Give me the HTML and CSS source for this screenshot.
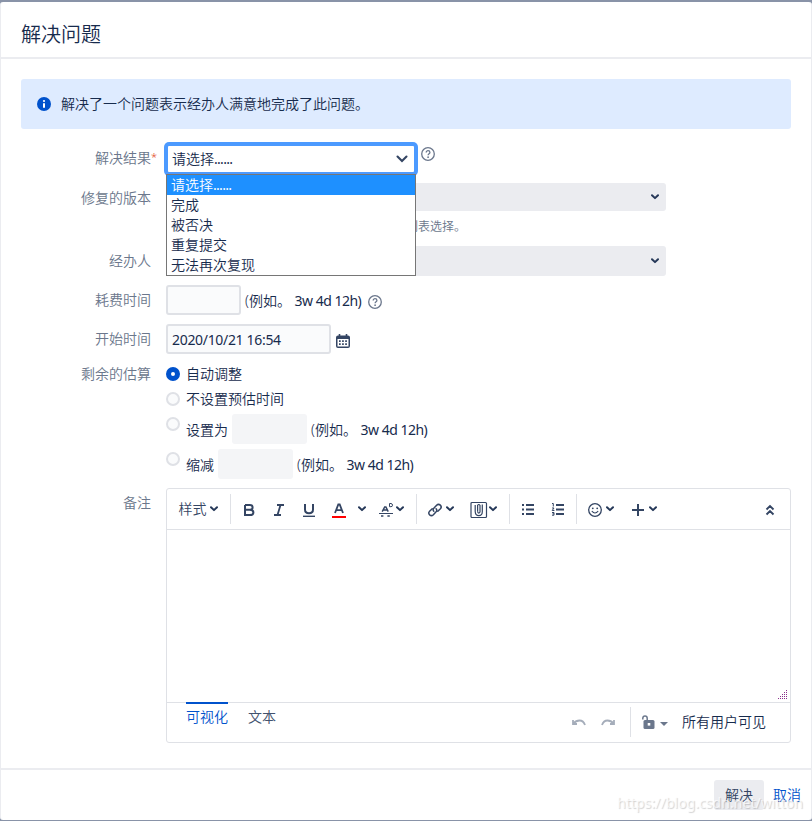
FILE: index.html
```html
<!DOCTYPE html>
<html lang="zh-CN">
<head>
  <meta charset="utf-8">
  <title>解决问题</title>
  <link rel="stylesheet" href="styles.css">
</head>
<body>
  <svg class="sprite" width="0" height="0">
    <symbol id="chevron" viewBox="0 0 8 6"><path d="M1 1.2 L4 4.1 L7 1.2" fill="none" stroke="currentColor" stroke-width="2" stroke-linecap="round" stroke-linejoin="round"/></symbol>
    <symbol id="help" viewBox="0 0 14 14"><circle cx="7" cy="7" r="6.3" fill="none" stroke="currentColor" stroke-width="1.3"/><path d="M5.2 5.6 C5.2 3 8.9 3.2 8.9 5.4 C8.9 6.8 7.1 6.8 7.1 8.3" fill="none" stroke="currentColor" stroke-width="1.3"/><circle cx="7.1" cy="10.2" r=".85" fill="currentColor"/></symbol>
  </svg>

  <div class="dialog">
    <div class="dialog-header">
      <h2>解决问题</h2>
    </div>

    <div class="dialog-content">
      <div class="message">
        <svg class="info-icon" viewBox="0 0 14 14"><circle cx="7" cy="7" r="7" fill="#0052cc"/><circle cx="7" cy="4" r="1.1" fill="#fff"/><path d="M7 6.2 V10.8" stroke="#fff" stroke-width="2"/></svg>
        <span>解决了一个问题表示经办人满意地完成了此问题。</span>
      </div>

      <div class="row row-result">
        <div class="label">解决结果<span class="required">*</span></div>
        <div class="field">
          <div class="select focused">
            <span>请选择<span class="dots">......</span></span>
            <svg class="select-arrow" viewBox="0 0 12 8"><path d="M1.5 1.5 L6 6 L10.5 1.5" fill="none" stroke="currentColor" stroke-width="2.1" stroke-linecap="round"/></svg>
            <div class="options">
              <div class="option selected">请选择<span class="dots">......</span></div>
              <div class="option">完成</div>
              <div class="option">被否决</div>
              <div class="option">重复提交</div>
              <div class="option">无法再次复现</div>
            </div>
          </div>
          <svg class="help help-result"><use href="#help"/></svg>
        </div>
      </div>

      <div class="row row-version">
        <div class="label">修复的版本</div>
        <div class="field stacked">
          <div class="picker picker-short"><svg class="chevron"><use href="#chevron"/></svg></div>
          <div class="description">列表选择。</div>
        </div>
      </div>

      <div class="row">
        <div class="label">经办人</div>
        <div class="field">
          <div class="picker"><svg class="chevron"><use href="#chevron"/></svg></div>
        </div>
      </div>

      <div class="row">
        <div class="label">耗费时间</div>
        <div class="field">
          <div class="text-input short"></div>
          <span class="hint">(例如。 <span class="sample">3w 4d 12h)</span></span>
          <svg class="help help-time"><use href="#help"/></svg>
        </div>
      </div>

      <div class="row row-date">
        <div class="label">开始时间</div>
        <div class="field">
          <div class="text-input">2020/10/21 16:54</div>
          <svg class="calendar" viewBox="0 0 14 14"><path d="M2 1.5 H12 Q14 1.5 14 3.5 V12 Q14 14 12 14 H2 Q0 14 0 12 V3.5 Q0 1.5 2 1.5Z M1.5 5 V12.5 H12.5 V5Z" fill="#344563" fill-rule="evenodd"/><path d="M3.5 0 V3 M10.5 0 V3" stroke="#344563" stroke-width="1.6"/><path d="M3 7.2 H11 M3 10.2 H11" stroke="#344563" stroke-width="1.8" stroke-dasharray="1.7 1.4"/></svg>
        </div>
      </div>

      <div class="row row-estimate">
        <div class="label">剩余的估算</div>
        <div class="radios">
          <div class="radio-row"><i class="radio checked"></i><span>自动调整</span></div>
          <div class="radio-row"><i class="radio"></i><span>不设置预估时间</span></div>
          <div class="radio-row tall"><i class="radio"></i><span>设置为</span><div class="disabled-input"></div><span>(例如。 <span class="sample">3w 4d 12h)</span></span></div>
          <div class="radio-row tall"><i class="radio"></i><span>缩减</span><div class="disabled-input"></div><span>(例如。 <span class="sample">3w 4d 12h)</span></span></div>
        </div>
      </div>

      <div class="row row-comment">
        <div class="label">备注</div>
        <div class="editor">
          <div class="toolbar">
            <div class="group">
              <div class="tool tool-style"><span>样式</span><svg class="chevron"><use href="#chevron"/></svg></div>
            </div>
            <div class="group group-text">
              <div class="tool"><svg width="16" height="16" viewBox="0 0 16 16"><path d="M4 3 H8.8 Q11.6 3 11.6 5.4 Q11.6 7.8 8.8 7.8 H4 M8.8 7.8 Q12.4 7.8 12.4 10.4 Q12.4 13 8.8 13 H4 V3" fill="none" stroke="currentColor" stroke-width="2"/></svg></div>
              <div class="tool"><svg width="16" height="16" viewBox="0 0 16 16"><path d="M6 3 H13 M3 13 H10 M9.5 3 L6.5 13" fill="none" stroke="currentColor" stroke-width="1.8"/></svg></div>
              <div class="tool"><svg width="16" height="16" viewBox="0 0 16 16"><path d="M4 2 V7.5 Q4 11.3 8 11.3 Q12 11.3 12 7.5 V2" fill="none" stroke="currentColor" stroke-width="2"/><path d="M2 14.3 H14" stroke="currentColor" stroke-width="1.4"/></svg></div>
              <div class="tool"><svg width="16" height="16" viewBox="0 0 16 16"><path d="M4 11 L7.3 2.5 H8.7 L12 11 M5.2 8.2 H10.8" fill="none" stroke="currentColor" stroke-width="1.8"/><path d="M1 15 H15" stroke="#f00" stroke-width="2"/></svg></div>
              <div class="tool narrow"><svg class="chevron"><use href="#chevron"/></svg></div>
              <div class="tool combo"><svg width="16" height="16" viewBox="0 0 16 16"><path d="M4.2 9.6 L6.7 5 H7.9 L10.2 9.6 M5.4 8 H9" fill="none" stroke="currentColor" stroke-width="1.5"/><path d="M1 11.5 H15" stroke="currentColor"/><path d="M3 14 H5.4 M9.4 14 H11.8" stroke="currentColor" stroke-width="1.5"/><path d="M11.5 1.5 H13 Q14.5 1.7 14.5 3.2 Q14.5 4.7 13 4.7 H11.5Z" fill="none" stroke="currentColor"/></svg><svg class="chevron"><use href="#chevron"/></svg></div>
            </div>
            <div class="group group-insert">
              <div class="tool combo"><svg width="16" height="16" viewBox="0 0 16 16"><g fill="none" stroke="currentColor" stroke-width="1.5" stroke-linecap="round"><path d="M6.8 9.3 Q5.4 7.8 6.8 6.3 L9.6 3.3 Q11.4 1.5 13.3 3.1 Q15.1 4.9 13.4 6.7 L10.8 9.3"/><path d="M9.1 6.8 Q10.5 8.2 9.1 9.8 L6.4 12.7 Q4.5 14.5 2.7 12.9 Q.9 11.1 2.6 9.3 L5.2 6.7"/></g></svg><svg class="chevron"><use href="#chevron"/></svg></div>
              <div class="tool combo clip"><svg width="18" height="18" viewBox="0 0 18 18"><rect x="1" y="1.5" width="15.5" height="15" rx="1" fill="none" stroke="currentColor" stroke-width="1.2"/><path d="M5.2 4 V10.5 Q5.4 14.6 8.8 14.6 Q12.3 14.6 12.3 10.8 V3.5 M7.6 10.8 V4.3 Q8.8 2.7 10 4.3 V11 Q8.8 13.2 7.6 11" fill="none" stroke="currentColor" stroke-width="1.2"/></svg><svg class="chevron"><use href="#chevron"/></svg></div>
            </div>
            <div class="group group-list">
              <div class="tool"><svg width="16" height="16" viewBox="0 0 16 16"><path d="M6 3 H14 M6 7.5 H14 M6 12 H14" stroke="currentColor" stroke-width="2"/><path d="M2 3 H4 M2 7.5 H4 M2 12 H4" stroke="currentColor" stroke-width="1.8"/></svg></div>
              <div class="tool"><svg width="16" height="16" viewBox="0 0 16 16"><path d="M6 3 H14 M6 7.5 H14 M6 12 H14" stroke="currentColor" stroke-width="2"/><path d="M2 1.5 H3.3 V4.5 M2 6 H4 L2.2 8.5 H4.4 M2 10.5 H4 V13.2 H2 M2.5 11.8 H4" fill="none" stroke="currentColor"/></svg></div>
            </div>
            <div class="group group-last">
              <div class="tool combo"><svg width="16" height="16" viewBox="0 0 16 16"><circle cx="8" cy="8" r="6.3" fill="none" stroke="currentColor" stroke-width="1.3"/><circle cx="5.8" cy="6.3" r=".9" fill="currentColor"/><circle cx="10.2" cy="6.3" r=".9" fill="currentColor"/><path d="M4.8 9 Q8 13 11.2 9" fill="none" stroke="currentColor" stroke-width="1.2"/></svg><svg class="chevron"><use href="#chevron"/></svg></div>
              <div class="tool combo"><svg width="16" height="16" viewBox="0 0 16 16"><path d="M8 2 V14 M2 8 H14" stroke="currentColor" stroke-width="2"/></svg><svg class="chevron"><use href="#chevron"/></svg></div>
            </div>
            <svg class="collapse" width="10" height="12" viewBox="0 0 10 12"><path d="M1.5 5.5 L5 2 L8.5 5.5 M1.5 10.5 L5 7 L8.5 10.5" fill="none" stroke="currentColor" stroke-width="1.9"/></svg>
          </div>
          <div class="editor-body">
            <svg class="grip" width="10" height="10" viewBox="0 0 10 10" shape-rendering="crispEdges"><path d="M0 9.5 H10 M2 7.5 H10 M4 5.5 H10 M6 3.5 H10 M8 1.5 H10" stroke="#8c2f8c" stroke-dasharray="1 1"/></svg>
          </div>
          <div class="editor-footer">
            <div class="tab active">可视化</div>
            <div class="tab">文本</div>
            <div class="history">
              <svg width="14" height="8" viewBox="0 0 14 8"><path d="M1 1 V5 H5 M1.5 4.5 Q4 1.5 7.5 1.5 Q11.5 1.5 13 6" fill="none" stroke="currentColor" stroke-width="1.8"/></svg>
              <svg width="14" height="8" viewBox="0 0 14 8"><path d="M13 1 V5 H9 M12.5 4.5 Q10 1.5 6.5 1.5 Q2.5 1.5 1 6" fill="none" stroke="currentColor" stroke-width="1.8"/></svg>
            </div>
            <div class="visibility">
              <svg width="13" height="14" viewBox="0 0 13 14"><path d="M.8 4.5 V3.2 Q.9 1 3 1 Q5.2 1 5.2 3.2 V5" fill="none" stroke="currentColor" stroke-width="1.5"/><rect x="1.5" y="5" width="11" height="9" rx="1.5" fill="currentColor"/><rect x="5.7" y="8" width="2.6" height="2.6" fill="#fff"/></svg>
              <i class="caret"></i>
              <span>所有用户可见</span>
            </div>
          </div>
        </div>
      </div>
    </div>

    <div class="dialog-footer">
      <div class="button">解决</div>
      <a class="cancel">取消</a>
    </div>
  </div>
  <div class="watermark">https://blog.csdn.net/witton</div>
</body>
</html>
```
FILE: styles.css
```css
* {
  box-sizing: border-box;
}

body {
  margin: 0;
  padding-top: 2px;
  height: 821px;
  overflow: hidden;
  background: #8993a8;
  color: #172b4d;
  font-family: "Noto Sans", "Noto Sans CJK SC", sans-serif;
  font-size: 14px;
  font-weight: 350;
  line-height: 20px;
}

svg {
  display: block;
  flex: none;
}

.sprite {
  position: absolute;
}

.dialog {
  height: 818px;
  display: flex;
  flex-direction: column;
  background: #fff;
  border: solid #ebecf0;
  border-width: 0 1px;
  border-radius: 3px;
}

.dialog-header {
  height: 57px;
  padding: 18px 20px 0;
  border-bottom: 2px solid #ebecf0;
}

.dialog-header h2 {
  margin: 0;
  font-size: 20px;
  line-height: 30px;
  font-weight: 350;
}

.dialog-content {
  height: 709px;
  padding: 20px 20px 0;
}

.message {
  display: flex;
  align-items: center;
  gap: 10px;
  height: 50px;
  margin-bottom: 15px;
  padding-left: 16px;
  border-radius: 3px;
  background: #deebff;
}

.info-icon {
  width: 14px;
  height: 14px;
}

/* Form rows */
.row {
  display: flex;
  gap: 15px;
  height: 39px;
}

.label {
  flex: none;
  width: 130px;
  padding-top: 5px;
  color: #6b778c;
  text-align: right;
}

.row-result .label {
  width: 134px;
  padding-top: 4px;
}

.row-result {
  gap: 11px;
}

.required {
  display: inline-block;
  width: 4px;
  color: #de350b;
  font-size: 11px;
  vertical-align: 2px;
  line-height: 10px;
}

.row-version {
  height: 63px;
}

.row-date {
  height: 35px;
}

.row-estimate {
  height: 129px;
}

.row-comment {
  height: 255px;
}

.field {
  display: flex;
  align-items: flex-start;
}

.stacked {
  flex-direction: column;
}

.select {
  position: relative;
  display: flex;
  align-items: center;
  justify-content: space-between;
  width: 250px;
  height: 30px;
  padding: 0 6px 0 4px;
  border: 2px solid #4c9aff;
  border-radius: 3px;
  background: #fff;
}

.select.focused {
  box-shadow: 0 0 0 2px #4c9aff;
}

.select-arrow {
  width: 12px;
  height: 8px;
  color: #344563;
}

.dots {
  font-weight: 400;
  letter-spacing: -0.7px;
}

/* Open dropdown list */
.options {
  position: absolute;
  z-index: 2;
  top: 28px;
  left: -2px;
  width: 250px;
  height: 102px;
  border: 1px solid #767676;
  background: #fff;
}

.option {
  height: 20px;
  padding-left: 4px;
}

.option.selected {
  background: #1e90ff;
  color: #fff;
}

.help {
  width: 14px;
  height: 14px;
  color: #6b778c;
}

.help-result {
  margin: 3px 0 0 5px;
}

.help-time {
  margin: 10px 0 0 8px;
}

.picker {
  display: flex;
  align-items: center;
  justify-content: flex-end;
  width: 500px;
  height: 30px;
  padding-right: 7px;
  border-radius: 3px;
  background: #ebecf0;
}

.picker-short {
  height: 28px;
}

.chevron {
  width: 8px;
  height: 6px;
  color: #253858;
}

.description {
  width: 300px;
  margin-top: 6px;
  color: #6b778c;
  font-size: 12px;
  text-align: right;
  white-space: nowrap;
}

.text-input {
  width: 165px;
  height: 30px;
  padding: 4px 4px;
  border: 2px solid #dfe1e6;
  border-radius: 3px;
  background: #fafbfc;
  font-weight: 400;
  letter-spacing: -0.32px;
}

.text-input.short {
  width: 75px;
}

.hint {
  width: 119px;
  padding: 6px 0 0 4px;
  white-space: nowrap;
}

.sample {
  font-weight: 400;
  letter-spacing: -0.5px;
}

.calendar {
  width: 14px;
  height: 14px;
  margin: 10px 0 0 5px;
}

/* Remaining estimate */
.radios {
  padding-top: 3px;
}

.radio-row {
  display: flex;
  align-items: flex-start;
  height: 25px;
  line-height: 24px;
}

.radio-row.tall {
  height: 35px;
  line-height: 35px;
}

.radio {
  width: 14px;
  height: 14px;
  margin: 5px 6px 0 0;
  border: 2px solid #dfe1e6;
  border-radius: 50%;
  background: #fafbfc;
}

.radio.checked {
  border: 5px solid #0052cc;
  background: #fff;
}

.disabled-input {
  width: 75px;
  height: 30px;
  margin: 2px 4px 0;
  border-radius: 3px;
  background: #f4f5f7;
}

/* Rich text editor */
.editor {
  width: 625px;
  height: 255px;
  border: 1px solid #dfe1e6;
  border-radius: 3px;
}

.toolbar {
  display: flex;
  align-items: center;
  height: 41px;
  border-bottom: 1px solid #dfe1e6;
  color: #344563;
}

.group {
  display: flex;
  height: 30px;
  border-right: 1px solid #dfe1e6;
}

.group-text {
  width: 186px;
  padding-left: 3px;
}

.group-insert {
  width: 93px;
  padding-left: 2px;
}

.group-list {
  width: 67px;
  padding-left: 3px;
}

.group-last {
  padding-left: 2px;
  border-right: 0;
}

.tool {
  display: flex;
  flex: none;
  align-items: center;
  justify-content: center;
  width: 30px;
}

.tool > svg:first-child:not(.chevron) {
  margin-top: 2px;
}

.tool-style {
  width: 63px;
  padding-right: 1px;
  gap: 3px;
}

.narrow {
  width: 16px;
}

.combo {
  width: 43px;
  gap: 3px;
}

.group-text .combo {
  width: 42px;
  gap: 2px;
}

.clip {
  gap: 1px;
}

.collapse {
  margin-top: 1px;
  margin-left: auto;
  margin-right: 15px;
}

.editor-body {
  display: flex;
  align-items: flex-end;
  justify-content: flex-end;
  height: 172px;
  padding: 0 2px 3px;
}

.editor-footer {
  display: flex;
  height: 40px;
  padding-left: 19px;
  border-top: 1px solid #dfe1e6;
}

.tab {
  height: 30px;
  margin-top: -1px;
  margin-right: 20px;
  padding-top: 3px;
  border-top: 2px solid transparent;
  color: #42526e;
}

.tab.active {
  border-color: #0052cc;
  color: #0052cc;
}

.history {
  display: flex;
  gap: 15px;
  margin: 16px 15px 0 auto;
  color: #a5adba;
}

.visibility {
  display: flex;
  align-items: center;
  width: 160px;
  height: 30px;
  margin-top: 4px;
  padding-left: 11px;
  border-left: 1px solid #dfe1e6;
}

.visibility svg {
  color: #6b778c;
}

.caret {
  margin: 4px 14px 0 5px;
  border: solid transparent;
  border-width: 4px 4px 0;
  border-top-color: #6b778c;
}

/* Dialog footer */
.dialog-footer {
  display: flex;
  justify-content: flex-end;
  gap: 9px;
  height: 52px;
  padding: 10px 10px 0;
  border-top: 2px solid #ebecf0;
  line-height: 30px;
}

.button {
  width: 50px;
  height: 30px;
  border-radius: 3px;
  background: #ebecf0;
  color: #344563;
  text-align: center;
}

.cancel {
  color: #0052cc;
}

.watermark {
  position: absolute;
  right: 9px;
  bottom: 8px;
  color: rgba(255, 255, 255, 0.7);
  font-weight: 400;
  letter-spacing: 0.06px;
  text-shadow: 1px 1px 1px rgba(0, 0, 0, 0.18);
}
```
